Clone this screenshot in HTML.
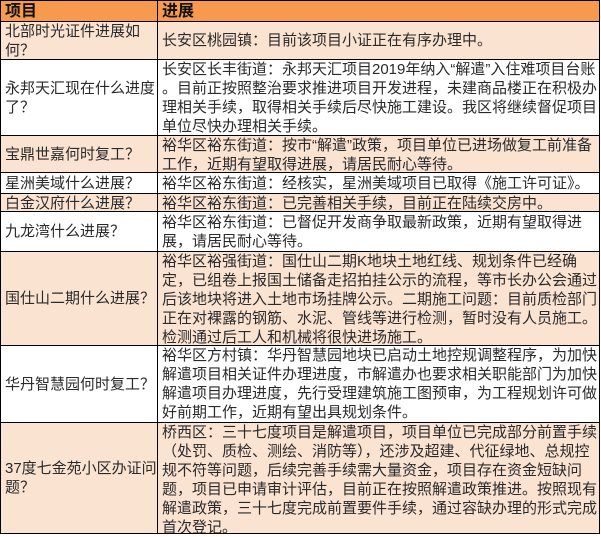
<!DOCTYPE html><html><head><meta charset="utf-8"><style>
body{margin:0;width:601px;height:535px;background:#fff;overflow:hidden;font-family:"Liberation Sans","Noto Sans CJK SC",sans-serif;color:#2a2a2a;position:relative}
.row{position:absolute;left:0;width:600px}
.cell{position:absolute;top:0;height:100%;display:table;table-layout:fixed;overflow:hidden}
.cell>div{display:table-cell;vertical-align:middle;font-size:15px;line-height:19px;white-space:nowrap}
.a{left:5px;width:151px}
.b{left:162px;width:436px}
.o{background:#fbe3d2}.w{background:#fff}
.h{background:#f79a4e;color:#111}
.h .cell>div{font-weight:bold;font-size:16px}
.hl{position:absolute;left:0;width:600px;height:1px;background:#000}
.vl{position:absolute;top:0;width:1px;height:534px;background:#000}
</style></head><body>
<div class="row h" style="top:0;height:22px"><div class="cell a"><div>项目</div></div><div class="cell b"><div>进展</div></div></div>
<div class="row o" style="top:22px;height:37px"><div class="cell a"><div>北部时光证件进展如<br>何？</div></div><div class="cell b"><div>长安区桃园镇：目前该项目小证正在有序办理中。</div></div></div>
<div class="row w" style="top:60px;height:75px"><div class="cell a"><div>永邦天汇现在什么进度<br>了？</div></div><div class="cell b"><div>长安区长丰街道：永邦天汇项目2019年纳入“解遣”入住难项目台账<br>。目前正按照整治要求推进项目开发进程，未建商品楼正在积极办<br>理相关手续，取得相关手续后尽快施工建设。我区将继续督促项目<br>单位尽快办理相关手续。</div></div></div>
<div class="row o" style="top:136px;height:36px"><div class="cell a"><div>宝鼎世嘉何时复工？</div></div><div class="cell b"><div>裕华区裕东街道：按市“解遣”政策，项目单位已进场做复工前准备<br>工作，近期有望取得进展，请居民耐心等待。</div></div></div>
<div class="row w" style="top:173px;height:20px"><div class="cell a"><div>星洲美域什么进展？</div></div><div class="cell b"><div>裕华区裕东街道：经核实，星洲美域项目已取得《施工许可证》。</div></div></div>
<div class="row o" style="top:194px;height:17px"><div class="cell a"><div>白金汉府什么进展？</div></div><div class="cell b"><div>裕华区裕东街道：已完善相关手续，目前正在陆续交房中。</div></div></div>
<div class="row w" style="top:212px;height:39px"><div class="cell a"><div>九龙湾什么进展？</div></div><div class="cell b"><div>裕华区裕东街道：已督促开发商争取最新政策，近期有望取得进<br>展，请居民耐心等待。</div></div></div>
<div class="row o" style="top:252px;height:93px"><div class="cell a"><div>国仕山二期什么进展？</div></div><div class="cell b"><div>裕华区裕强街道：国仕山二期K地块土地红线、规划条件已经确<br>定，已组卷上报国土储备走招拍挂公示的流程，等市长办公会通过<br>后该地块将进入土地市场挂牌公示。二期施工问题：目前质检部门<br>正在对裸露的钢筋、水泥、管线等进行检测，暂时没有人员施工。<br>检测通过后工人和机械将很快进场施工。</div></div></div>
<div class="row w" style="top:346px;height:76px"><div class="cell a"><div>华丹智慧园何时复工？</div></div><div class="cell b"><div>裕华区方村镇：华丹智慧园地块已启动土地控规调整程序，为加快<br>解遣项目相关证件办理进度，市解遣办也要求相关职能部门为加快<br>解遣项目办理进度，先行受理建筑施工图预审，为工程规划许可做<br>好前期工作，近期有望出具规划条件。</div></div></div>
<div class="row o" style="top:423px;height:110px"><div class="cell a"><div>37度七金苑小区办证问<br>题？</div></div><div class="cell b"><div>桥西区：三十七度项目是解遣项目，项目单位已完成部分前置手续<br>（处罚、质检、测绘、消防等），还涉及超建、代征绿地、总规控<br>规不符等问题，后续完善手续需大量资金，项目存在资金短缺问<br>题，项目已申请审计评估，目前正在按照解遣政策推进。按照现有<br>解遣政策，三十七度完成前置要件手续，通过容缺办理的形式完成<br>首次登记。</div></div></div>
<div class="hl" style="top:0"></div><div class="hl" style="top:21px"></div><div class="hl" style="top:59px"></div><div class="hl" style="top:135px"></div><div class="hl" style="top:172px"></div><div class="hl" style="top:193px"></div><div class="hl" style="top:211px"></div><div class="hl" style="top:251px"></div><div class="hl" style="top:345px"></div><div class="hl" style="top:422px"></div><div class="hl" style="top:533px"></div>
<div class="vl" style="left:0"></div><div class="vl" style="left:157px"></div><div class="vl" style="left:599px"></div>
</body></html>
